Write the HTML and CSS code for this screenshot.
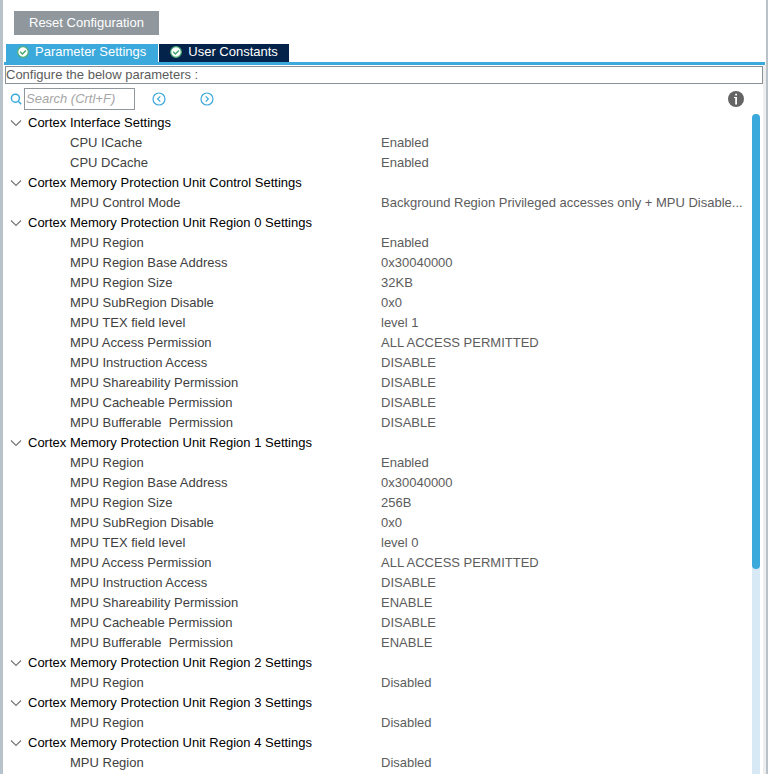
FILE: index.html
```html
<!DOCTYPE html>
<html lang="en">
<head>
<meta charset="utf-8">
<title>Parameter Settings</title>
<link rel="stylesheet" href="styles.css">
</head>
<body>
<main class="panel">
  <button class="reset" type="button">Reset Configuration</button>
  <nav class="tabs">
    <button class="tab tab-active" type="button">
      <svg class="check" viewBox="0 0 12 12" aria-hidden="true"><circle cx="6" cy="6" r="5.3"/><path d="M3.2 5.8 5.4 8 8.9 4.4"/></svg>Parameter Settings</button>
    <button class="tab" type="button">
      <svg class="check" viewBox="0 0 12 12" aria-hidden="true"><circle cx="6" cy="6" r="5.3"/><path d="M3.2 5.8 5.4 8 8.9 4.4"/></svg>User Constants</button>
  </nav>
  <section class="page">
    <p class="hint">Configure the below parameters :</p>
    <div class="toolbar">
      <label class="search-label" for="search"><svg class="lens" viewBox="0 0 12 12" aria-label="Search"><circle cx="5.4" cy="5.2" r="4"/><path d="M8.2 8.2 11.2 11.2"/></svg></label>
      <input class="search" id="search" type="text" placeholder="Search (Crtl+F)">
      <button class="step" type="button" aria-label="Previous"><svg class="ring" viewBox="0 0 14 14"><circle cx="7" cy="7" r="6"/><path d="M8.3 4.3 5.6 7 8.3 9.7"/></svg></button>
      <button class="step" type="button" aria-label="Next"><svg class="ring" viewBox="0 0 14 14"><circle cx="7" cy="7" r="6"/><path d="M5.7 4.3 8.4 7 5.7 9.7"/></svg></button>
      <button class="info" type="button" aria-label="Information"><svg class="info-icon" viewBox="0 0 16 16"><circle cx="8" cy="8" r="8" fill="#646464"/><path d="M7.2 2.8h1.8v1.8H7.2zM6 6h3v7.6H7.2V6.9H6z" fill="#fff"/></svg></button>
    </div>
    <div class="content">
      <table class="params">
        <colgroup><col class="name-col"><col></colgroup>
        <tbody>
          <tr><th colspan="2"><button class="group" type="button"><svg class="chevron" viewBox="0 0 12 8" aria-hidden="true"><path d="M1 1.5 6 6.5 11 1.5"/></svg>Cortex Interface Settings</button></th></tr>
          <tr><td>CPU ICache</td><td>Enabled</td></tr>
          <tr><td>CPU DCache</td><td>Enabled</td></tr>
        </tbody>
        <tbody>
          <tr><th colspan="2"><button class="group" type="button"><svg class="chevron" viewBox="0 0 12 8" aria-hidden="true"><path d="M1 1.5 6 6.5 11 1.5"/></svg>Cortex Memory Protection Unit Control Settings</button></th></tr>
          <tr><td>MPU Control Mode</td><td>Background Region Privileged accesses only + MPU Disable...</td></tr>
        </tbody>
        <tbody>
          <tr><th colspan="2"><button class="group" type="button"><svg class="chevron" viewBox="0 0 12 8" aria-hidden="true"><path d="M1 1.5 6 6.5 11 1.5"/></svg>Cortex Memory Protection Unit Region 0 Settings</button></th></tr>
          <tr><td>MPU Region</td><td>Enabled</td></tr>
          <tr><td>MPU Region Base Address</td><td>0x30040000</td></tr>
          <tr><td>MPU Region Size</td><td>32KB</td></tr>
          <tr><td>MPU SubRegion Disable</td><td>0x0</td></tr>
          <tr><td>MPU TEX field level</td><td>level 1</td></tr>
          <tr><td>MPU Access Permission</td><td>ALL ACCESS PERMITTED</td></tr>
          <tr><td>MPU Instruction Access</td><td>DISABLE</td></tr>
          <tr><td>MPU Shareability Permission</td><td>DISABLE</td></tr>
          <tr><td>MPU Cacheable Permission</td><td>DISABLE</td></tr>
          <tr><td>MPU Bufferable  Permission</td><td>DISABLE</td></tr>
        </tbody>
        <tbody>
          <tr><th colspan="2"><button class="group" type="button"><svg class="chevron" viewBox="0 0 12 8" aria-hidden="true"><path d="M1 1.5 6 6.5 11 1.5"/></svg>Cortex Memory Protection Unit Region 1 Settings</button></th></tr>
          <tr><td>MPU Region</td><td>Enabled</td></tr>
          <tr><td>MPU Region Base Address</td><td>0x30040000</td></tr>
          <tr><td>MPU Region Size</td><td>256B</td></tr>
          <tr><td>MPU SubRegion Disable</td><td>0x0</td></tr>
          <tr><td>MPU TEX field level</td><td>level 0</td></tr>
          <tr><td>MPU Access Permission</td><td>ALL ACCESS PERMITTED</td></tr>
          <tr><td>MPU Instruction Access</td><td>DISABLE</td></tr>
          <tr><td>MPU Shareability Permission</td><td>ENABLE</td></tr>
          <tr><td>MPU Cacheable Permission</td><td>DISABLE</td></tr>
          <tr><td>MPU Bufferable  Permission</td><td>ENABLE</td></tr>
        </tbody>
        <tbody>
          <tr><th colspan="2"><button class="group" type="button"><svg class="chevron" viewBox="0 0 12 8" aria-hidden="true"><path d="M1 1.5 6 6.5 11 1.5"/></svg>Cortex Memory Protection Unit Region 2 Settings</button></th></tr>
          <tr><td>MPU Region</td><td>Disabled</td></tr>
        </tbody>
        <tbody>
          <tr><th colspan="2"><button class="group" type="button"><svg class="chevron" viewBox="0 0 12 8" aria-hidden="true"><path d="M1 1.5 6 6.5 11 1.5"/></svg>Cortex Memory Protection Unit Region 3 Settings</button></th></tr>
          <tr><td>MPU Region</td><td>Disabled</td></tr>
        </tbody>
        <tbody>
          <tr><th colspan="2"><button class="group" type="button"><svg class="chevron" viewBox="0 0 12 8" aria-hidden="true"><path d="M1 1.5 6 6.5 11 1.5"/></svg>Cortex Memory Protection Unit Region 4 Settings</button></th></tr>
          <tr><td>MPU Region</td><td>Disabled</td></tr>
        </tbody>
      </table>
      <div class="track" aria-hidden="true"><div class="thumb"></div></div>
    </div>
  </section>
</main>
</body>
</html>
```
FILE: styles.css
```css
* { box-sizing: border-box; }

body {
  margin: 0;
  background: #fff;
  color: #404040;
  font: 13px/20px "Liberation Sans", Arial, sans-serif;
}

button, input { font: inherit; }

button {
  border: 0;
  padding: 0;
  background: none;
  color: inherit;
}

svg {
  display: block;
  flex: none;
  fill: none;
}

.panel {
  display: flex;
  flex-direction: column;
  min-height: 100vh;
  border-left: 3px solid #b8c2cb;
  border-right: 2px solid #b8c2c8;
  padding-top: 11px;
}

.reset {
  align-self: flex-start;
  height: 24px;
  margin-left: 11px;
  padding: 0 15px;
  background: #90989e;
  color: #fff;
}

.tabs {
  display: flex;
  gap: 1px;
  margin: 9px 1px 0;
  padding-left: 2px;
  border-bottom: 3px solid #3ba9dc;
}

.tab {
  display: flex;
  align-items: center;
  gap: 6px;
  height: 18px;
  padding: 0 11px 2px;
  background: #03234b;
  color: #fff;
  line-height: 16px;
}

.tab-active {
  padding-right: 12px;
  background: #3ba9dc;
}

.check { width: 12px; height: 12px; }
.check circle { fill: #fff; stroke: #4fae78; stroke-width: 1.2; }
.check path { stroke: #3fa66b; stroke-width: 1.4; }

.page {
  display: flex;
  flex: 1;
  flex-direction: column;
  border-right: 3px solid #eee;
}

.hint {
  margin: 1px 0 0 2px;
  border: 1px solid #8a9299;
  color: #5c5c5c;
  line-height: 16px;
}

.toolbar {
  display: flex;
  align-items: center;
  margin-top: 4px;
  padding: 0 19px 0 7px;
}

.search-label { margin-right: 2px; }
.lens { width: 12px; height: 12px; stroke: #3ba9dc; stroke-width: 1.5; }

.search {
  width: 111px;
  height: 22px;
  margin-right: 17px;
  padding: 0 1px 2px;
  border: 1px solid #90989e;
  font-style: italic;
}
.search::placeholder { color: #a6a6a6; opacity: 1; }

.step { margin-right: 34px; }
.ring { width: 14px; height: 14px; stroke: #3ba9dc; stroke-width: 1.2; }
.info { margin-left: auto; }
.info-icon { width: 16px; height: 16px; }

.content {
  display: flex;
  flex: 1;
  gap: 6px;
  margin-top: 3px;
  padding: 0 3px 0 7px;
}

.params {
  flex: 1;
  align-self: flex-start;
  width: 100%;
  min-width: 0;
  border-collapse: collapse;
  table-layout: fixed;
}

.name-col { width: 50%; }

.params th, .params td {
  height: 20px;
  padding: 0;
  overflow: hidden;
  text-align: left;
  text-overflow: ellipsis;
  white-space: pre;
  font-weight: normal;
}

.params td:first-child { padding-left: 60px; }
.params td:last-child { padding-left: 3px; color: #5c5c5c; }

.group {
  display: flex;
  align-items: center;
  gap: 6px;
  color: #000;
}

.chevron { width: 12px; height: 8px; stroke: #777; stroke-width: 1.2; }

.track {
  flex: none;
  width: 8px;
  margin-top: 1px;
  border-radius: 4px 4px 0 0;
  background: #d8e9f6;
}

.thumb {
  height: 69%;
  border-radius: 4px;
  background: #3ba9dc;
}
```
